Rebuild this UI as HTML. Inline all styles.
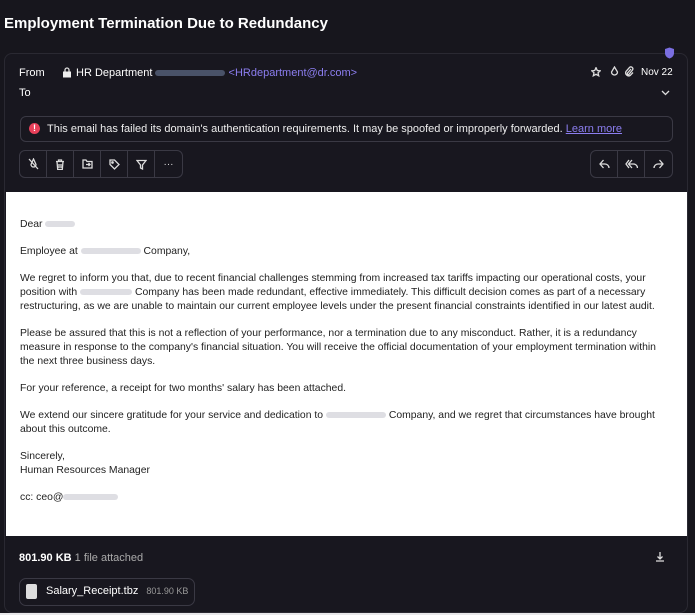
<!DOCTYPE html>
<html><head><meta charset="utf-8"><style>
*{box-sizing:border-box;margin:0;padding:0}
body{width:695px;height:615px;background:#17161d;font-family:"Liberation Sans",sans-serif;color:#e8e8ee;position:relative;overflow:hidden}
.title{position:absolute;left:4px;top:15px;font-size:15px;font-weight:bold;color:#fff}
.panel{position:absolute;left:4px;top:53px;width:684px;height:560px;border:1px solid #2a2932;border-radius:8px;background:#18171f}
.abs{position:absolute}
.lbl{font-size:11px;color:#fff}
.warn{position:absolute;left:15px;top:62px;width:653px;height:26px;border:1px solid #3a3944;border-radius:6px;font-size:11px;line-height:24px;padding-left:26px;color:#eee}
.btns{position:absolute;height:28px;border:1px solid #3a3944;border-radius:6px;display:flex}
.btns div{width:27px;height:100%;border-right:1px solid #3a3944;display:flex;align-items:center;justify-content:center}
.btns div:last-child{border-right:none}
.mail{position:absolute;left:1px;top:138px;width:681px;height:344px;background:#fff;color:#222;font-size:10.4px;line-height:14px;padding:26px 14px 0 14px}
.mail p{margin-bottom:13px}
.blur{display:inline-block;height:6px;background:#c8c8d0;border-radius:3px;vertical-align:middle;opacity:.6}
svg{stroke:#ddd;fill:none;stroke-width:1.3}
</style></head><body>
<div class="title">Employment Termination Due to Redundancy</div>
<div class="panel">
<div class="abs lbl" style="left:14px;top:13px">From</div>
<svg class="abs" style="left:57px;top:13px" width="10" height="11" viewBox="0 0 10 11"><rect x="1" y="4.5" width="8" height="6" fill="#eee" stroke="none"/><path d="M3 4.5V3a2 2 0 014 0v1.5"/></svg>
<div class="abs lbl" style="left:71px;top:13px">HR Department <span class="blur" style="width:70px;background:#6a7a9a"></span> <span style="color:#8c7ef0">&lt;HRdepartment@dr.com&gt;</span></div>
<div class="abs lbl" style="left:14px;top:33px">To</div>
<svg class="abs" style="left:586px;top:13px" width="10" height="10" viewBox="0 0 10 10"><path d="M5 .7l1.3 2.8 3 .3-2.3 2 .7 3L5 7.3 2.3 8.8l.7-3-2.3-2 3-.3z"/></svg>
<svg class="abs" style="left:605px;top:12px" width="9" height="11" viewBox="0 0 9 11"><path d="M4.5 1L1.5 6a3 3 0 006 0z"/></svg>
<svg class="abs" style="left:619px;top:12px" width="10" height="11" viewBox="0 0 10 11"><path d="M7 3L3.5 7a1 1 0 001.5 1.3L8.5 4a2 2 0 00-3-2.6L2 5.5a3 3 0 004.4 3.8L9 6.5"/></svg>
<div class="abs" style="left:636px;top:13px;font-size:10px;color:#fff">Nov 22</div>
<svg class="abs" style="left:656px;top:36px" width="9" height="6" viewBox="0 0 9 6"><path d="M1 1l3.5 3.5L8 1"/></svg>
<div class="warn">This email has failed its domain's authentication requirements. It may be spoofed or improperly forwarded. <span style="color:#8c7ef0;text-decoration:underline">Learn more</span></div>
<div class="abs" style="left:24px;top:69px;width:11px;height:11px;border-radius:50%;background:#e8405a;color:#fff;font-size:9px;line-height:11px;text-align:center;font-weight:bold">!</div>
<div class="btns" style="left:14px;top:96px">
<div><svg width="11" height="12" viewBox="0 0 11 12"><path d="M5.5 1L3 6.5a2.5 2.5 0 005 0zM1 1l9 10"/></svg></div>
<div><svg width="10" height="11" viewBox="0 0 10 11"><path d="M1 2.5h8M3.5 2.5V1h3v1.5M2 2.5l.7 8h4.6l.7-8M4 5v4M6 5v4"/></svg></div>
<div><svg width="11" height="10" viewBox="0 0 11 10"><path d="M1 1h3l1 1.5h5v6.5H1zM4 5.5h4M6.5 4l1.5 1.5L6.5 7"/></svg></div>
<div><svg width="11" height="11" viewBox="0 0 11 11"><path d="M1 1h4.5l4.5 4.5-4.5 4.5L1 5.5z"/><circle cx="3.5" cy="3.5" r=".7"/></svg></div>
<div><svg width="11" height="11" viewBox="0 0 11 11"><path d="M1 1.5h9L6.5 6v4L4.5 9V6z"/></svg></div>
<div style="font-size:10px;color:#ddd">···</div>
</div>
<div class="btns" style="left:585px;top:96px">
<div><svg width="11" height="10" viewBox="0 0 11 10"><path d="M4.5 1L1 5l3.5 4M1 5h5a4 4 0 014 4"/></svg></div>
<div><svg width="13" height="10" viewBox="0 0 13 10"><path d="M4 1L1 5l3 4M7 1L3.5 5 7 9M3.5 5h5a4 4 0 014 4"/></svg></div>
<div><svg width="11" height="10" viewBox="0 0 11 10"><path d="M6.5 1L10 5 6.5 9M10 5H5a4 4 0 00-4 4"/></svg></div>
</div>
<div class="mail">
<p>Dear <span class="blur" style="width:30px"></span></p>
<p>Employee at <span class="blur" style="width:60px"></span> Company,</p>
<p>We regret to inform you that, due to recent financial challenges stemming from increased tax tariffs impacting our operational costs, your position with <span class="blur" style="width:52px"></span> Company has been made redundant, effective immediately. This difficult decision comes as part of a necessary restructuring, as we are unable to maintain our current employee levels under the present financial constraints identified in our latest audit.</p>
<p>Please be assured that this is not a reflection of your performance, nor a termination due to any misconduct. Rather, it is a redundancy measure in response to the company's financial situation. You will receive the official documentation of your employment termination within the next three business days.</p>
<p>For your reference, a receipt for two months' salary has been attached.</p>
<p>We extend our sincere gratitude for your service and dedication to <span class="blur" style="width:60px"></span> Company, and we regret that circumstances have brought about this outcome.</p>
<p>Sincerely,<br>Human Resources Manager</p>
<p>cc: ceo@<span class="blur" style="width:55px"></span></p>
</div>
<div class="abs" style="left:14px;top:498px;font-size:11px"><b style="color:#fff">801.90 KB</b> <span style="color:#aaa">1 file attached</span></div>
<svg class="abs" style="left:650px;top:497px" width="10" height="11" viewBox="0 0 10 11"><path d="M5 1v7M2.5 5.5L5 8l2.5-2.5M1 10h8"/></svg>
<div class="abs" style="left:14px;top:524px;width:176px;height:28px;border:1px solid #3a3944;border-radius:7px"></div>
<div class="abs" style="left:21px;top:530px;width:11px;height:15px;background:#ddd;border-radius:2px"></div>
<div class="abs" style="left:41px;top:531px;font-size:11px;color:#fff">Salary_Receipt.tbz <span style="font-size:9px;color:#999;margin-left:5px">801.90 KB</span></div>
</div>
<svg class="abs" style="left:664px;top:47px;z-index:5" width="11" height="12" viewBox="0 0 11 12"><path d="M5.5 0.5L10 2v4c0 3-2.2 4.8-4.5 5.5C3.2 10.8 1 9 1 6V2z" fill="#7a6ee0" stroke="none"/></svg>
<div class="abs" style="left:0;top:613px;width:695px;height:2px;background:#e8e8ea"></div>
</body></html>
